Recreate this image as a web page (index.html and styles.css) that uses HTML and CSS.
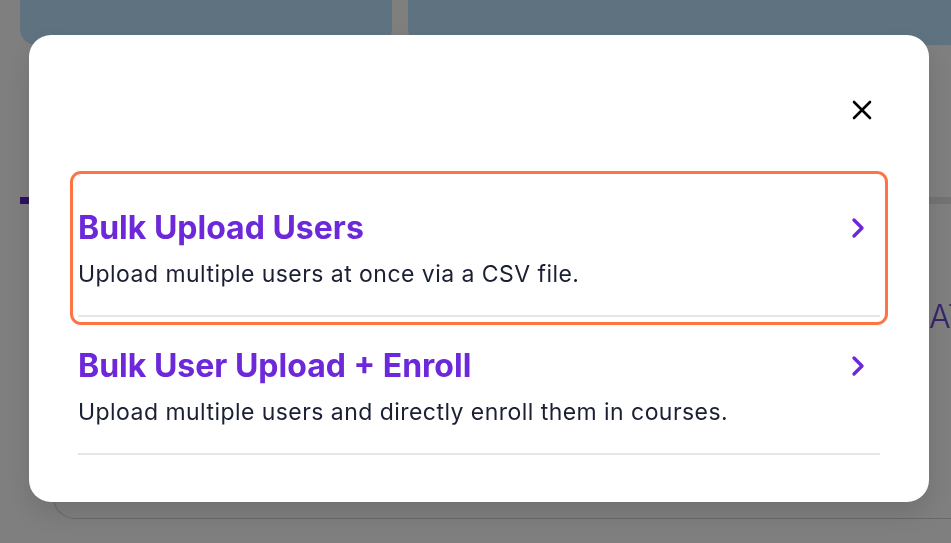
FILE: index.html
```html
<!DOCTYPE html>
<html lang="en">
<head>
<meta charset="utf-8">
<title>Bulk upload</title>
<link rel="stylesheet" href="styles.css">
</head>
<body>
<div class="page">
  <div class="top-row">
    <div class="stat-card stat-card--narrow"></div>
    <div class="stat-card stat-card--wide"></div>
  </div>
  <div class="tabs-line"><span class="tabs-line__active"></span></div>
  <div class="table-card">
    <div class="table-head">
      <span class="table-head__spacer"></span>
      <span class="table-head__label">AT</span>
    </div>
  </div>
</div>

<div class="overlay">
  <div class="modal" role="dialog">
    <div class="modal__header">
      <button class="close-btn" aria-label="Close">
        <svg width="20" height="20" viewBox="0 0 20 20" fill="none" stroke="#000" stroke-width="2.6" stroke-linecap="round">
          <path d="M2 2L18 18M18 2L2 18"/>
        </svg>
      </button>
    </div>
    <div class="option option--focused">
      <div class="option__row">
        <span class="option__title">Bulk Upload Users</span>
        <svg class="option__chevron" width="14" height="22" viewBox="0 0 14 22" fill="none" stroke="#6d28d9" stroke-width="3.4" stroke-linecap="round" stroke-linejoin="round">
          <path d="M3 3L11 11L3 19"/>
        </svg>
      </div>
      <p class="option__desc">Upload multiple users at once via a CSV file.</p>
      <div class="option__divider"></div>
    </div>
    <div class="option">
      <div class="option__row">
        <span class="option__title">Bulk User Upload + Enroll</span>
        <svg class="option__chevron" width="14" height="22" viewBox="0 0 14 22" fill="none" stroke="#6d28d9" stroke-width="3.4" stroke-linecap="round" stroke-linejoin="round">
          <path d="M3 3L11 11L3 19"/>
        </svg>
      </div>
      <p class="option__desc">Upload multiple users and directly enroll them in courses.</p>
      <div class="option__divider"></div>
    </div>
  </div>
</div>
</body>
</html>
```
FILE: styles.css
```css
* { box-sizing: border-box; }
html, body {
  margin: 0;
  width: 951px;
  height: 543px;
  overflow: hidden;
  background: #ffffff;
  font-family: Inter, "Noto Sans", sans-serif;
}
.page {
  padding-left: 20px;
  height: 543px;
  overflow: hidden;
}
.top-row {
  display: flex;
  gap: 16px;
  height: 45px;
}
.stat-card {
  background: #bde5ff;
  border-radius: 0 0 16px 16px;
}
.stat-card--narrow { width: 372px; }
.stat-card--wide { flex: 1; border-bottom-right-radius: 0; }
.tabs-line {
  margin-top: 152px;
  height: 7px;
  background: #e6e6e6;
  display: flex;
}
.tabs-line__active {
  width: 120px;
  background: #5a20ca;
}
.table-card {
  margin-left: 33px;
  height: 315px;
  border-left: 1px solid #d4d4d4;
  border-bottom: 1px solid #d4d4d4;
  border-bottom-left-radius: 22px;
  overflow: hidden;
}
.table-head {
  display: grid;
  grid-template-columns: 875px 44px;
  margin-top: 93px;
  height: 40px;
  overflow: hidden;
}
.table-head__label {
  font-size: 32px;
  font-weight: 300;
  color: #6a48d0;
  line-height: 40px;
  white-space: nowrap;
}
.overlay {
  position: fixed;
  inset: 0;
  background: rgba(0, 0, 0, 0.5);
  display: flex;
  align-items: flex-start;
  padding: 35px 0 0 29px;
}
.modal {
  width: 900px;
  height: 467px;
  background: #fff;
  border-radius: 22px;
  padding: 0 49px;
  box-shadow: 0 12px 28px rgba(0, 0, 0, 0.12);
}
.modal__header {
  display: flex;
  justify-content: flex-end;
  padding-top: 65px;
  height: 144px;
}
.close-btn {
  width: 20px;
  height: 20px;
  margin-right: 8px;
  padding: 0;
  border: 0;
  background: none;
  display: block;
}
.close-btn svg { display: block; }
.option {
  height: 138px;
  padding-top: 32px;
  border-radius: 3px;
  display: flex;
  flex-direction: column;
}
.option--focused {
  outline: 3px solid #ff7443;
  outline-offset: 5px;
}
.option__row {
  display: flex;
  align-items: center;
  justify-content: space-between;
  height: 34px;
}
.option__title {
  font-size: 32px;
  font-weight: 700;
  color: #6d28d9;
  line-height: 34px;
  white-space: nowrap;
}
.option__chevron {
  margin-right: 15px;
  display: block;
}
.option__desc {
  margin: 15px 0 0;
  font-size: 23px;
  line-height: 28px;
  letter-spacing: 0.45px;
  color: #1b1f33;
}
.option__divider {
  margin-top: auto;
  height: 2px;
  background: #e5e5ea;
}
```
